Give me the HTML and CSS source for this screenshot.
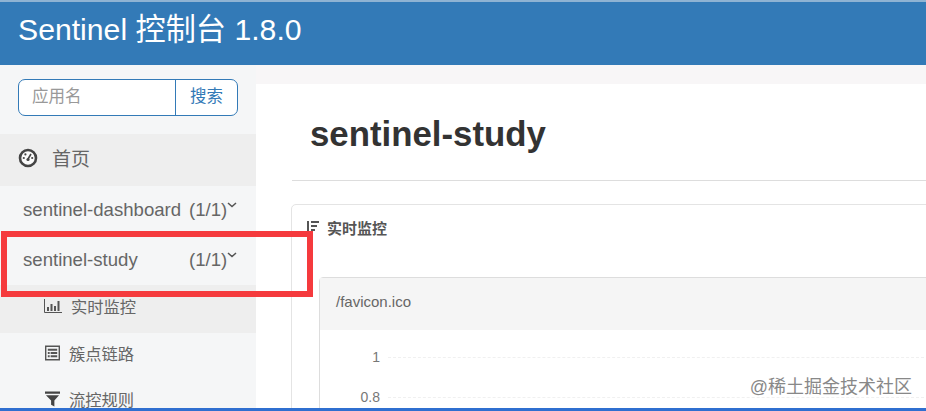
FILE: index.html
```html
<!DOCTYPE html>
<html lang="en">

<head>
    <meta charset="UTF-8">
    <meta name="viewport" content="width=device-width, initial-scale=1.0">
    <title>Sentinel 控制台</title>
    <link rel="stylesheet" href="styles.css">
</head>

<body>
    <header class="topbar">Sentinel 控制台 1.8.0</header>

    <div class="layout">
        <aside class="sidebar">
            <div class="search">
                <div class="search-input">应用名</div>
                <div class="search-btn">搜索</div>
            </div>

            <div class="nav-home">
                <svg class="home-icon" viewBox="0 0 20 20">
                    <circle cx="10" cy="10" r="8" fill="#fafafa" stroke="#444" stroke-width="2.6"/>
                    <circle cx="5.8" cy="10" r="1.1" fill="#444"/>
                    <circle cx="7.4" cy="6.4" r="1.1" fill="#444"/>
                    <circle cx="14.2" cy="10" r="1.1" fill="#444"/>
                    <path d="M13 6 L10 11" stroke="#444" stroke-width="1.6"/>
                    <circle cx="10" cy="11.5" r="1.6" fill="#444"/>
                </svg>
                <span>首页</span>
            </div>

            <div class="app-row">
                <span class="app-name">sentinel-dashboard</span>
                <span class="app-count">(1/1)</span>
                <svg class="chevron" viewBox="0 0 10 6"><path d="M1 1 L5 4.6 L9 1" fill="none" stroke="#555" stroke-width="1.5"/></svg>
            </div>
            <div class="app-row">
                <span class="app-name">sentinel-study</span>
                <span class="app-count">(1/1)</span>
                <svg class="chevron" viewBox="0 0 10 6"><path d="M1 1 L5 4.6 L9 1" fill="none" stroke="#555" stroke-width="1.5"/></svg>
            </div>

            <div class="sub-item sub-active">
                <svg class="sub-icon" viewBox="0 0 18 14">
                    <path d="M.5 0 V13.5 H18" fill="none" stroke="#555" stroke-width="1"/>
                    <path d="M3 8h2v4H3zM6.500 5h2v7h-2zM10 7h2v5h-2zM13.500 2h2v10h-2z" fill="#555"/>
                </svg>
                <span>实时监控</span>
            </div>
            <div class="sub-item">
                <svg class="sub-icon sub-icon-list" viewBox="0 0 16 16">
                    <path fill-rule="evenodd" d="M0 0h16v16H0z M1.500 1.500v13h13v-13z" fill="#555"/>
                    <path d="M3 3.500h10v2H3zM3 7h2v2H3zM6 7h7v2H6zM3 10.500h2v2H3zM6 10.500h7v2H6z" fill="#555"/>
                </svg>
                <span>簇点链路</span>
            </div>
            <div class="sub-item">
                <svg class="sub-icon sub-icon-list" viewBox="0 0 16 16">
                    <path d="M0 0h16v2.500H0zM1 4h14L10 9.500V16L6.500 14V9.500z" fill="#444"/>
                </svg>
                <span>流控规则</span>
            </div>
        </aside>

        <main class="content">
            <div class="strip"></div>
            <div class="panel">
                <h1 class="page-title">sentinel-study</h1>
                <div class="card">
                    <div class="card-title">
                        <svg class="sort-icon" viewBox="0 0 13 13">
                            <path d="M1 0h2v13H1zM5 0h8v2H5zM5 4h6v2H5zM5 8h4v2H5z" fill="#555"/>
                        </svg>
                        <span>实时监控</span>
                    </div>
                    <div class="inner-card">
                        <div class="inner-head">/favicon.ico</div>
                        <div class="chart">
                            <div class="chart-row"><span class="tick">1</span><span class="grid-line"></span></div>
                            <div class="chart-row"><span class="tick">0.8</span><span class="grid-line"></span></div>
                        </div>
                    </div>
                </div>
            </div>
        </main>
    </div>

    <div class="red-box"></div>
    <div class="watermark">@稀土掘金技术社区</div>
    <div class="bottom-line"></div>
</body>

</html>
```

FILE: styles.css
```css
* {
    box-sizing: border-box;
}

html,
body {
    margin: 0;
    padding: 0;
    height: 411px;
    overflow: hidden;
}

body {
    position: relative;
    font-family: "Liberation Sans", "Noto Sans CJK SC", sans-serif;
    color: #555;
    background-color: #fff;
}

.topbar {
    height: 65px;
    padding: 9px 0 0 18px;
    border-top: 2px solid #8fb3d3;
    background-color: #337ab7;
    color: #fff;
    font-size: 30.200px;
    line-height: 38px;
}

.layout {
    display: flex;
    height: 346px;
    overflow: hidden;
}

.sidebar {
    width: 256px;
    flex-shrink: 0;
    overflow: hidden;
    background-color: #f5f6f7;
}

.search {
    display: flex;
    width: 220px;
    height: 37px;
    margin: 14px 0 0 18px;
    border: 1px solid #337ab7;
    border-radius: 7px;
    background-color: #fff;
    font-size: 16.500px;
    line-height: 33px;
}

.search-input {
    width: 157px;
    padding-left: 13px;
    border-right: 1px solid #337ab7;
    color: #999;
}

.search-btn {
    flex: 1;
    text-align: center;
    color: #337ab7;
}

.nav-home {
    display: flex;
    align-items: center;
    height: 52px;
    margin-top: 18px;
    padding: 0 0 5px 18px;
    background-color: #eeeeee;
    font-size: 19px;
    color: #666;
}

.home-icon {
    width: 20px;
    height: 20px;
    margin: 1px 14px 0 0;
}

.app-row {
    position: relative;
    display: flex;
    height: 50px;
    padding: 0 0 3px 23px;
    align-items: center;
    font-size: 18.600px;
    color: #666;
}

.app-name {
    width: 166px;
}

.chevron {
    width: 10px;
    height: 6px;
    margin: -10px 0 0 0;
}

.sub-item {
    display: flex;
    align-items: center;
    height: 46px;
    padding: 0 0 7px 44px;
    font-size: 16.300px;
    color: #666;
}

.sub-active {
    height: 48px;
    background-color: #eeeeee;
    margin-top: -1px;
}

.sub-icon {
    width: 18px;
    height: 14px;
    margin-right: 9px;
}

.sub-icon-list {
    width: 15px;
    height: 16px;
    margin-left: 1px;
    margin-right: 9px;
}

.content {
    flex: 1;
    display: flex;
    flex-direction: column;
    min-width: 0;
}

.strip {
    height: 19px;
    background-color: #f8f6f7;
}

.panel {
    flex: 1;
    overflow: hidden;
    margin-left: 2px;
    padding-left: 34px;
    background-color: #fff;
}

.page-title {
    margin: 0;
    height: 97px;
    padding: 31px 0 0 18px;
    border-bottom: 1px solid #ddd;
    font-size: 34.800px;
    line-height: 38px;
    font-weight: bold;
    color: #333;
}

.card {
    margin: 23px -10px 0 -1px;
    height: 300px;
    border: 1px solid #e4e4e4;
    border-radius: 5px;
    padding: 12px 0 0 14px;
}

.card-title {
    display: flex;
    align-items: center;
    gap: 8px;
    height: 20px;
    font-size: 15px;
    font-weight: bold;
    color: #555;
}

.sort-icon {
    width: 13px;
    height: 13px;
}

.inner-card {
    margin: 40px 0 0 13px;
    border: 1px solid #ddd;
    border-radius: 4px;
    height: 200px;
}

.inner-head {
    height: 52px;
    padding-left: 16px;
    background-color: #f5f5f5;
    font-size: 15px;
    line-height: 48px;
    color: #666;
}

.chart {
    padding-top: 7px;
}

.chart-row {
    display: flex;
    align-items: center;
    height: 40px;
}

.tick {
    width: 60px;
    text-align: right;
    font-size: 14px;
    color: #777;
}

.grid-line {
    flex: 1;
    margin-left: 8px;
    border-top: 1px dashed #f0f0f0;
}

/* annotation drawn over the screenshot */
.red-box {
    position: absolute;
    left: 1px;
    top: 231px;
    width: 312px;
    height: 66px;
    border: 6px solid #f53a3d;
}

.watermark {
    position: absolute;
    right: 14px;
    top: 377px;
    font-size: 18px;
    line-height: 20px;
    color: #888;
}

.bottom-line {
    position: absolute;
    left: 0;
    right: 0;
    bottom: 0;
    height: 3px;
    background-color: #2f6fd0;
}
```
